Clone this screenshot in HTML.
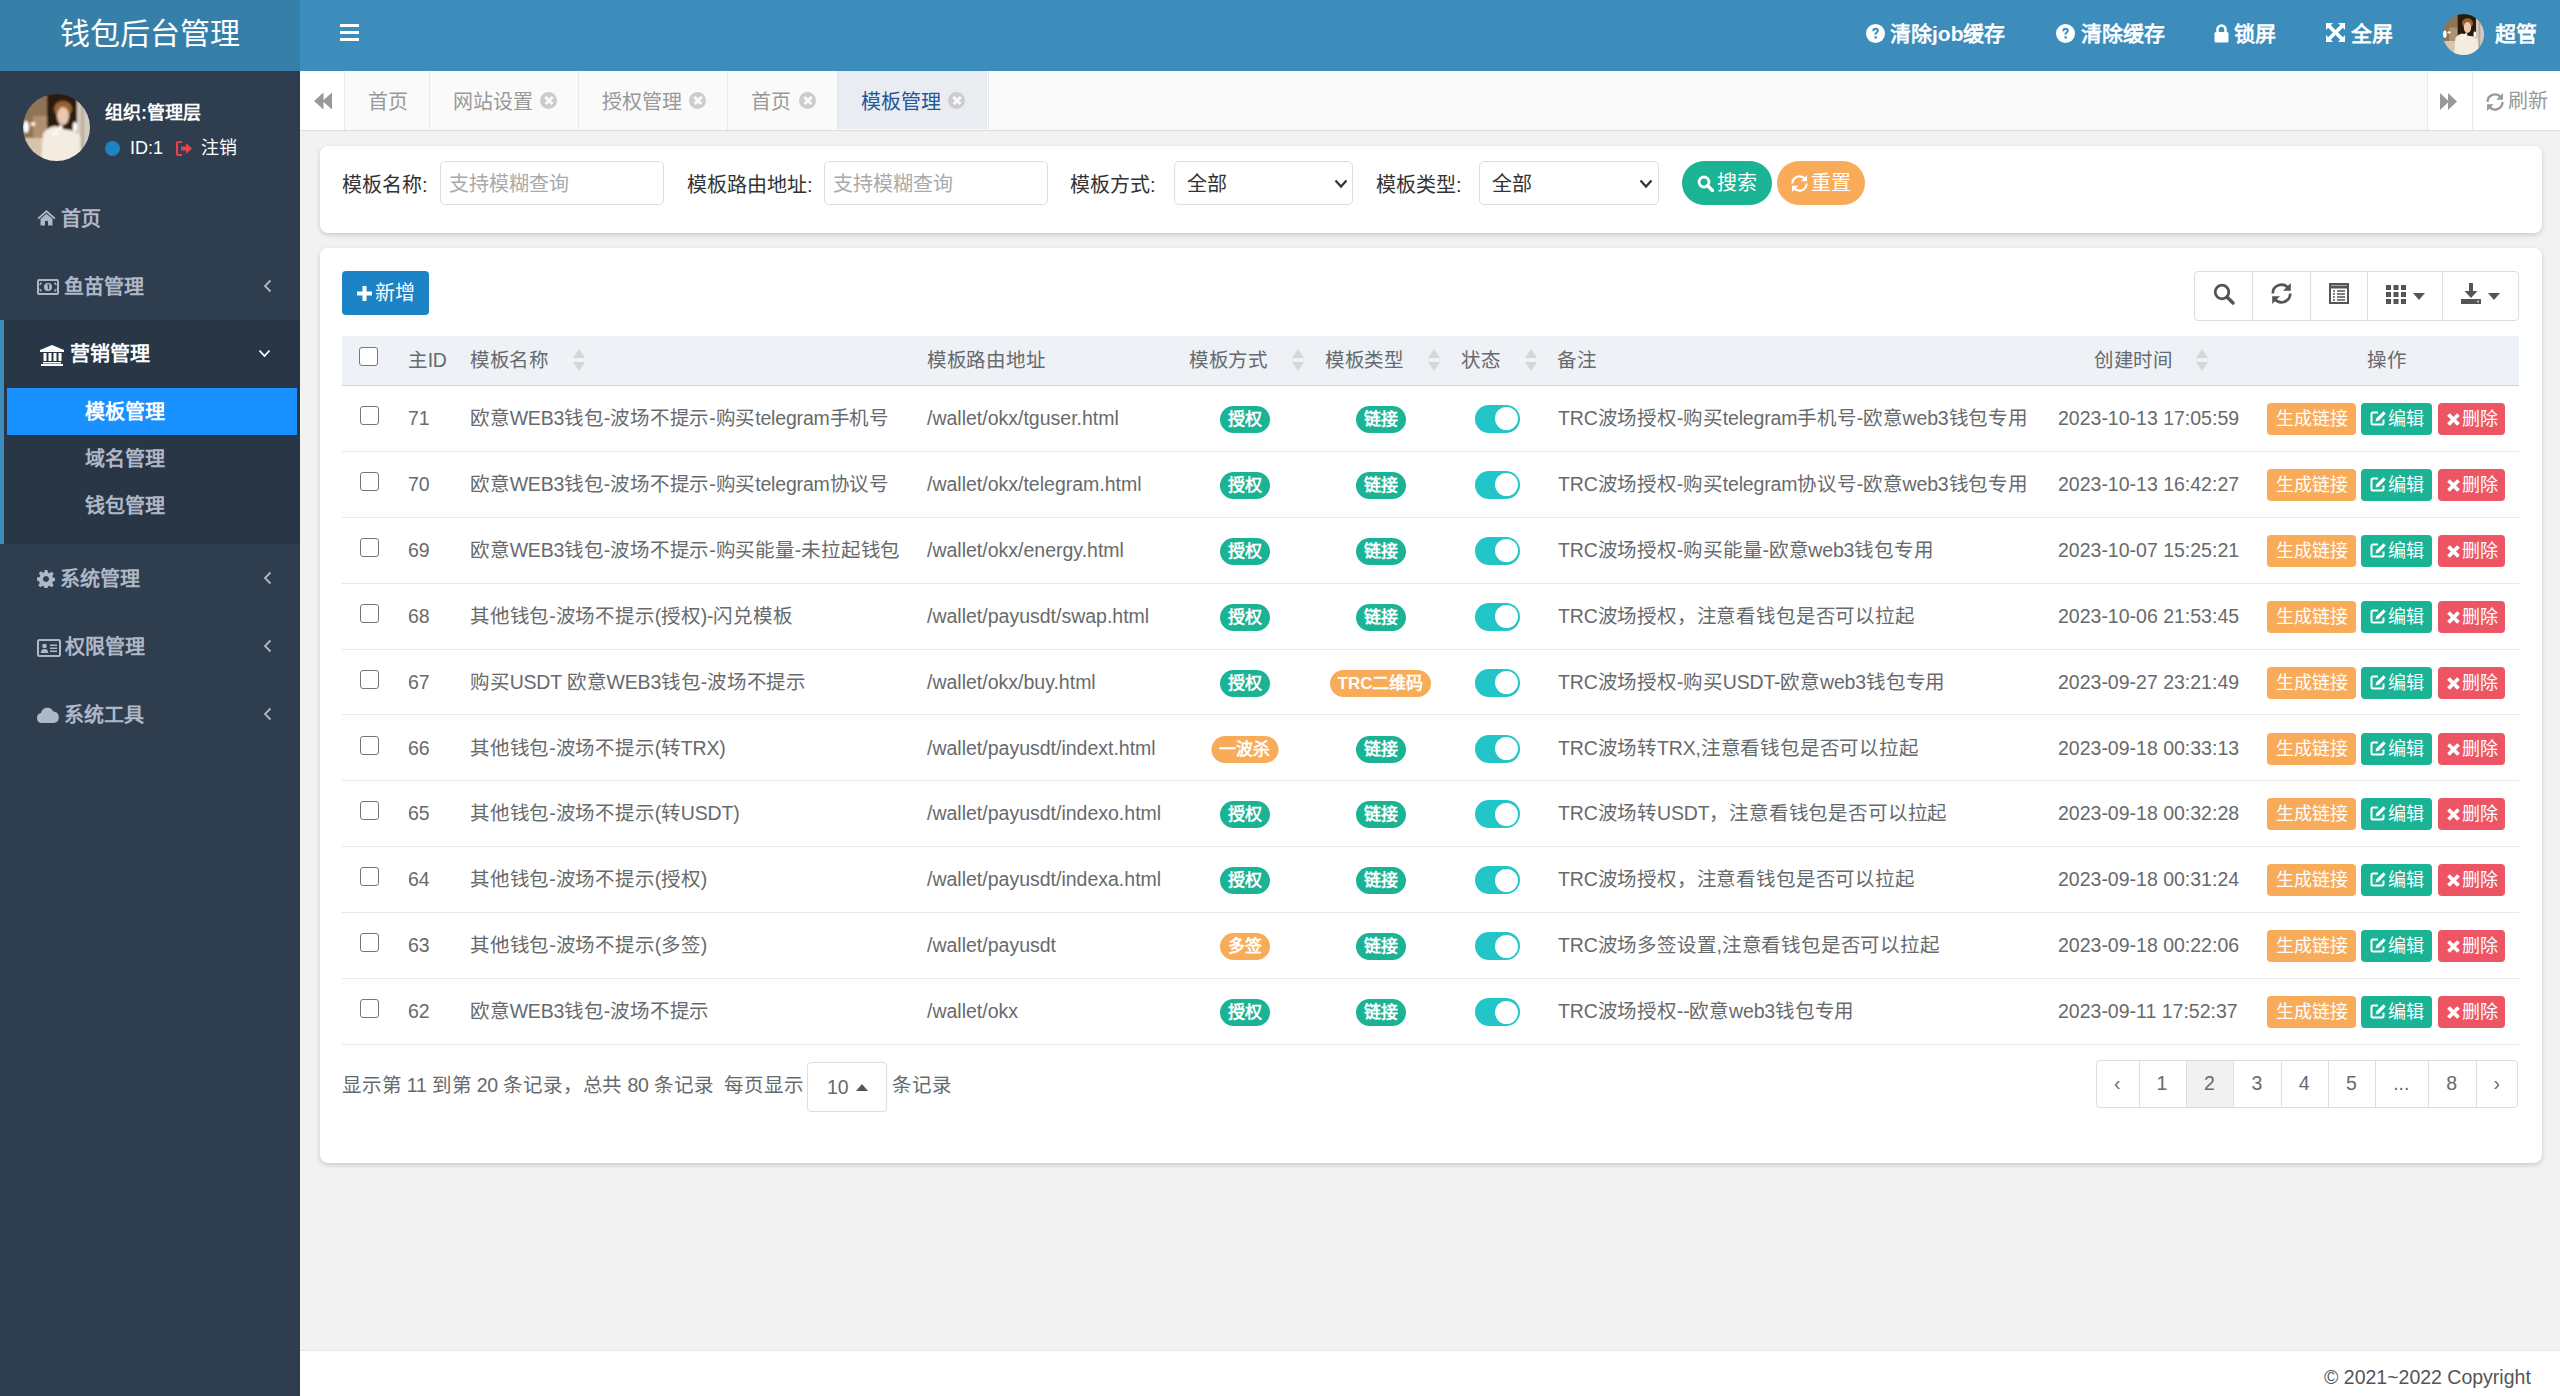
<!DOCTYPE html>
<html lang="zh-CN"><head><meta charset="utf-8"><style>
*{box-sizing:border-box;margin:0;padding:0}
html,body{width:2560px;height:1396px;overflow:hidden}
body{font-family:"Liberation Sans",sans-serif;background:#f2f2f2;color:#333;position:relative;font-size:20px}
.a{position:absolute;white-space:nowrap}
#logo{left:0;top:0;width:300px;height:71px;background:#367fa9;color:#fff;font-size:30px;line-height:67px;text-align:center;font-weight:300}
#hdr{left:300px;top:0;width:2260px;height:71px;background:#3c8dbc}
.nav{color:#fff;font-size:21px;font-weight:bold;line-height:30px;top:19px}
#side{left:0;top:71px;width:300px;height:1325px;background:#2f3e4f}
.mi{color:#afb8c7;font-size:20px;font-weight:bold;line-height:26px}
.sub{color:#afb8c7;font-size:20px;font-weight:bold;line-height:26px;left:85px}
#tabs{left:300px;top:71px;width:2260px;height:60px;background:#fafafa;border-bottom:1px solid #dcdcdc}
.tab{top:0;height:59px;border-left:1px solid #e8e8e8;color:#999;font-size:20px;line-height:62px}
.tx{position:absolute;top:21px;width:17px;height:17px;border-radius:50%;background:#ccc}
.tx:before,.tx:after{content:"";position:absolute;left:3.5px;top:7.25px;width:10px;height:2.5px;background:#fafafa;transform:rotate(45deg)}
.tx:after{transform:rotate(-45deg)}
#foot{left:300px;top:1350px;width:2260px;height:46px;background:#fff;border-top:1px solid #e3e7eb}
.panel{background:#fff;border-radius:8px;box-shadow:0 2px 5px rgba(0,0,0,.17)}
.lbl{font-size:20px;color:#333;line-height:26px;top:172px}
.inp{top:161px;height:44px;border:1px solid #ddd;border-radius:5px;background:#fff;font-size:20px;line-height:44px;padding-left:8px;color:#aaa}
.sel{color:#333;padding-left:12px}
.pill{top:161px;height:44px;border-radius:22px;color:#fff;font-size:20px;line-height:44px;text-align:center}
.row{left:342px;width:2177px;border-bottom:1px solid #e7eaec;background:#fff}
.cb{width:19px;height:19px;border:1.5px solid #767676;border-radius:3px;background:#fff}
.td{font-size:19.5px;color:#676a6c;line-height:26px}
.th{font-size:19.5px;color:#676a6c;line-height:26px;top:347px;letter-spacing:-0.3px}
.cj{letter-spacing:-0.18px}
.badge{height:27px;line-height:27px;border-radius:13.5px;color:#fff;font-size:17px;font-weight:bold;padding:0 8px;transform:translateX(-50%)}
.tog{width:45px;height:28px;border-radius:14px;background:#23c6c8}
.knob{position:absolute;right:2px;top:2.5px;width:23px;height:23px;border-radius:50%;background:#fff}
.btn{height:32px;line-height:32px;border-radius:4px;color:#fff;font-size:18px;text-align:center}
.btn .ic{display:inline-block;vertical-align:top;line-height:0;margin-right:1px}.btn .ic svg{display:block}
.srt{width:12px;height:24px}
.tb{top:271px;height:50px;border:1px solid #ddd;background:#fff}
.pg{top:1060px;height:48px;border:1px solid #ddd;border-left:none;font-size:20px;color:#676a6c;line-height:46px;text-align:center}

</style></head><body>
<div id="logo" class="a">钱包后台管理</div>
<div id="hdr" class="a"></div>
<!-- hamburger -->
<div class="a" style="left:340px;top:24px;width:19px;height:3px;background:#fff"></div>
<div class="a" style="left:340px;top:31px;width:19px;height:3px;background:#fff"></div>
<div class="a" style="left:340px;top:38px;width:19px;height:3px;background:#fff"></div>
<!-- right nav -->
<svg class="a" style="left:1866px;top:24px" width="19" height="19" viewBox="0 0 19 19"><circle cx="9.5" cy="9.5" r="9.5" fill="#fff"/><path d="M6.3 7.2q0-3.4 3.3-3.4 3.2 0 3.2 2.9 0 1.6-1.6 2.5-.9.5-.9 1.6H8.5q0-2 1.3-2.7.9-.5.9-1.3 0-1-1.1-1-1.2 0-1.3 1.4z M8.5 12.2h2.4v2.4H8.5z" fill="#3c8dbc"/></svg>
<div class="a nav" style="left:1890px">清除job缓存</div>
<svg class="a" style="left:2056px;top:24px" width="19" height="19" viewBox="0 0 19 19"><circle cx="9.5" cy="9.5" r="9.5" fill="#fff"/><path d="M6.3 7.2q0-3.4 3.3-3.4 3.2 0 3.2 2.9 0 1.6-1.6 2.5-.9.5-.9 1.6H8.5q0-2 1.3-2.7.9-.5.9-1.3 0-1-1.1-1-1.2 0-1.3 1.4z M8.5 12.2h2.4v2.4H8.5z" fill="#3c8dbc"/></svg>
<div class="a nav" style="left:2081px">清除缓存</div>
<svg class="a" style="left:2214px;top:24px" width="15" height="19" viewBox="0 0 15 19"><path d="M3.5 8V5.5a4 4 0 0 1 8 0V8" fill="none" stroke="#fff" stroke-width="2.6"/><rect x="0.5" y="8" width="14" height="10.5" rx="1.5" fill="#fff"/></svg>
<div class="a nav" style="left:2234px">锁屏</div>
<svg class="a" style="left:2326px;top:23px" width="19" height="19" viewBox="0 0 19 19"><path d="M0 0h7L4.8 2.2 9.5 6.9 14.2 2.2 12 0h7v7l-2.2-2.2-4.7 4.7 4.7 4.7L19 12v7h-7l2.2-2.2-4.7-4.7-4.7 4.7L7 19H0v-7l2.2 2.2 4.7-4.7-4.7-4.7L0 7z" fill="#fff"/></svg>
<div class="a nav" style="left:2351px">全屏</div>
<svg class="a" style="left:2443px;top:14px" width="41" height="41" viewBox="0 0 67 67"><defs><clipPath id="cpb"><circle cx="33.5" cy="33.5" r="33.5"/></clipPath><filter id="blb"><feGaussianBlur stdDeviation="0.8"/></filter></defs><g clip-path="url(#cpb)"><g filter="url(#blb)">
<rect x="-2" y="-2" width="71" height="71" fill="#a88c6c"/>
<rect x="-2" y="-2" width="28" height="50" fill="#8f7355"/>
<rect x="10" y="22" width="14" height="22" fill="#b09070"/>
<rect x="24" y="-2" width="31" height="38" fill="#2a1a0c"/>
<rect x="54" y="-2" width="15" height="60" fill="#d5cbbf"/>
<rect x="58" y="5" width="3" height="50" fill="#b9ab9a"/>
<rect x="-2" y="44" width="26" height="25" fill="#d8c3ab"/>
<ellipse cx="3" cy="33" rx="3" ry="6" fill="#fff"/>
<ellipse cx="10" cy="30" rx="2.5" ry="2" fill="#fff4d8"/>
<ellipse cx="52" cy="33" rx="2.2" ry="5" fill="#fff"/>
<ellipse cx="40" cy="15" rx="9" ry="8" fill="#9a6232"/>
<ellipse cx="40" cy="22" rx="6" ry="9" fill="#ecc8ad"/>
<path d="M18 69L20 40Q24 33 32 32L40 35Q50 36 57 41L58 69z" fill="#f4ece1"/>
<path d="M28 40Q34 34 38 30L40 34Q36 38 32 44z" fill="#fbf6ee"/>
</g></g></svg>
<div class="a nav" style="left:2495px">超管</div>

<div id="side" class="a">
 <svg class="a" style="left:23px;top:23px" width="67" height="67" viewBox="0 0 67 67"><defs><clipPath id="cpa"><circle cx="33.5" cy="33.5" r="33.5"/></clipPath><filter id="bla"><feGaussianBlur stdDeviation="0.8"/></filter></defs><g clip-path="url(#cpa)"><g filter="url(#bla)">
<rect x="-2" y="-2" width="71" height="71" fill="#a88c6c"/>
<rect x="-2" y="-2" width="28" height="50" fill="#8f7355"/>
<rect x="10" y="22" width="14" height="22" fill="#b09070"/>
<rect x="24" y="-2" width="31" height="38" fill="#2a1a0c"/>
<rect x="54" y="-2" width="15" height="60" fill="#d5cbbf"/>
<rect x="58" y="5" width="3" height="50" fill="#b9ab9a"/>
<rect x="-2" y="44" width="26" height="25" fill="#d8c3ab"/>
<ellipse cx="3" cy="33" rx="3" ry="6" fill="#fff"/>
<ellipse cx="10" cy="30" rx="2.5" ry="2" fill="#fff4d8"/>
<ellipse cx="52" cy="33" rx="2.2" ry="5" fill="#fff"/>
<ellipse cx="40" cy="15" rx="9" ry="8" fill="#9a6232"/>
<ellipse cx="40" cy="22" rx="6" ry="9" fill="#ecc8ad"/>
<path d="M18 69L20 40Q24 33 32 32L40 35Q50 36 57 41L58 69z" fill="#f4ece1"/>
<path d="M28 40Q34 34 38 30L40 34Q36 38 32 44z" fill="#fbf6ee"/>
</g></g></svg>
 <div class="a" style="left:105px;top:29px;font-size:18px;font-weight:bold;color:#fff;line-height:26px">组织:管理层</div>
 <div class="a" style="left:105px;top:70px;width:15px;height:15px;border-radius:50%;background:#1c84c6"></div>
 <div class="a" style="left:130px;top:64px;font-size:18px;color:#fff;line-height:26px">ID:1</div>
 <svg class="a" style="left:176px;top:69px" width="17" height="17" viewBox="0 0 17 17"><path d="M6 2H2.5Q1 2 1 3.5v10Q1 15 2.5 15H6" fill="none" stroke="#e4434f" stroke-width="2.2"/><path d="M5 6.5h5V3l6 5.5-6 5.5v-3.5H5z" fill="#e4434f"/></svg>
 <div class="a" style="left:201px;top:64px;font-size:18px;color:#fff;line-height:26px">注销</div>

 <!-- menu: 首页 -->
 <svg class="a" style="left:37px;top:138px" width="19" height="17" viewBox="0 0 19 17"><path d="M9.5 1L0.5 9l1.3 1.3L9.5 3.5l7.7 6.8L18.5 9zM3.5 10v6.5h4.5v-4.5h3v4.5h4.5V10L9.5 4.7z" fill="#afb8c7"/></svg>
 <div class="a mi" style="left:61px;top:135px">首页</div>
 <!-- 鱼苗管理 -->
 <svg class="a" style="left:37px;top:208px" width="22" height="16" viewBox="0 0 22 16"><rect x="1" y="1" width="20" height="14" rx="1" fill="none" stroke="#afb8c7" stroke-width="2"/><circle cx="11" cy="8" r="4" fill="#afb8c7"/><path d="M10.3 5.8h1.2v4.5" stroke="#2f3e4f" stroke-width="1.3" fill="none"/><path d="M4 3.5q0 2-1.5 2M18 3.5q0 2 1.5 2M4 12.5q0-2-1.5-2M18 12.5q0-2 1.5-2" stroke="#afb8c7" stroke-width="1.5" fill="none"/></svg>
 <div class="a mi" style="left:64px;top:203px">鱼苗管理</div>
 <svg class="a" style="left:263px;top:208px" width="9" height="14" viewBox="0 0 9 14"><path d="M7.5 1.5L2 7l5.5 5.5" fill="none" stroke="#afb8c7" stroke-width="1.8"/></svg>
 <!-- treeview active -->
 <div class="a" style="left:0;top:249px;width:300px;height:224px;background:#283646"></div>
 <div class="a" style="left:0;top:249px;width:4px;height:224px;background:#3c8dbc"></div>
 <svg class="a" style="left:40px;top:274px" width="24" height="21" viewBox="0 0 24 21"><path d="M12 0L0 5v2h24V5z M1 19h22v2H1z M3 17h18v1.5H3z M3.5 8h3v8h-3z M8.5 8h3v8h-3z M13.5 8h3v8h-3z M18.5 8h3v8h-3z" fill="#fff"/></svg>
 <div class="a mi" style="left:70px;top:270px;color:#fff">营销管理</div>
 <svg class="a" style="left:258px;top:278px" width="13" height="9" viewBox="0 0 13 9"><path d="M1.5 1.5L6.5 7l5-5.5" fill="none" stroke="#fff" stroke-width="1.8"/></svg>
 <div class="a" style="left:7px;top:317px;width:290px;height:47px;background:#1890ff"></div>
 <div class="a sub" style="top:328px;color:#fff">模板管理</div>
 <div class="a sub" style="top:375px">域名管理</div>
 <div class="a sub" style="top:422px">钱包管理</div>
 <!-- 系统管理 -->
 <svg class="a" style="left:37px;top:499px" width="18" height="18" viewBox="0 0 18 18"><path d="M7.6 0h2.8l.5 2.6 1.6.7 2.2-1.5 2 2-1.5 2.2.7 1.6 2.6.5v2.8l-2.6.5-.7 1.6 1.5 2.2-2 2-2.2-1.5-1.6.7-.5 2.6H7.6l-.5-2.6-1.6-.7-2.2 1.5-2-2 1.5-2.2-.7-1.6L0 10.4V7.6l2.6-.5.7-1.6-1.5-2.2 2-2 2.2 1.5 1.6-.7z M9 6a3 3 0 1 0 0.01 0z" fill="#afb8c7" fill-rule="evenodd"/></svg>
 <div class="a mi" style="left:60px;top:495px">系统管理</div>
 <svg class="a" style="left:263px;top:500px" width="9" height="14" viewBox="0 0 9 14"><path d="M7.5 1.5L2 7l5.5 5.5" fill="none" stroke="#afb8c7" stroke-width="1.8"/></svg>
 <!-- 权限管理 -->
 <svg class="a" style="left:37px;top:568px" width="24" height="18" viewBox="0 0 24 18"><rect x="1" y="1" width="22" height="16" rx="1.5" fill="none" stroke="#afb8c7" stroke-width="2"/><circle cx="7.5" cy="7" r="2.3" fill="#afb8c7"/><path d="M3.8 14q0-4 3.7-4t3.7 4z M13 5.5h7v1.6h-7z M13 8.5h7v1.6h-7z M13 11.5h7v1.6h-7z" fill="#afb8c7"/></svg>
 <div class="a mi" style="left:65px;top:563px">权限管理</div>
 <svg class="a" style="left:263px;top:568px" width="9" height="14" viewBox="0 0 9 14"><path d="M7.5 1.5L2 7l5.5 5.5" fill="none" stroke="#afb8c7" stroke-width="1.8"/></svg>
 <!-- 系统工具 -->
 <svg class="a" style="left:37px;top:636px" width="22" height="16" viewBox="0 0 22 16"><path d="M5 16a5 5 0 0 1-1-9.9A6.5 6.5 0 0 1 16.3 4.5 5.8 5.8 0 0 1 17 16z" fill="#afb8c7"/></svg>
 <div class="a mi" style="left:64px;top:631px">系统工具</div>
 <svg class="a" style="left:263px;top:636px" width="9" height="14" viewBox="0 0 9 14"><path d="M7.5 1.5L2 7l5.5 5.5" fill="none" stroke="#afb8c7" stroke-width="1.8"/></svg>
</div>

<div id="tabs" class="a">
 <div class="a" style="left:0;top:0;width:44px;height:59px;background:#fff"></div>
 <svg class="a" style="left:14px;top:21px" width="19" height="18" viewBox="0 0 19 18"><path d="M0 9L9.5 0.5v17z M8.5 9L18 0.5v17z" fill="#999"/></svg>
 <div class="a tab" style="left:44px;width:85px"><span class="a" style="left:23px;top:0">首页</span></div>
 <div class="a tab" style="left:129px;width:149px"><span class="a" style="left:23px;top:0">网站设置</span><i class="tx" style="left:110px"></i></div>
 <div class="a tab" style="left:278px;width:149px"><span class="a" style="left:23px;top:0">授权管理</span><i class="tx" style="left:110px"></i></div>
 <div class="a tab" style="left:427px;width:110px"><span class="a" style="left:23px;top:0">首页</span><i class="tx" style="left:71px"></i></div>
 <div class="a tab" style="left:537px;width:150px;height:58px;background:#e9edf2;color:#245697"><span class="a" style="left:23px;top:0">模板管理</span><i class="tx" style="left:110px;background:#ccc"></i></div>
 <div class="a" style="left:688px;top:0;width:1px;height:59px;background:#e8e8e8"></div>
 <div class="a" style="left:2127px;top:0;width:133px;height:59px;background:#fff;border-left:1px solid #e8e8e8"></div>
 <svg class="a" style="left:2140px;top:22px" width="18" height="17" viewBox="0 0 18 17"><path d="M0 0L9 8.5 0 17z M8 0l9 8.5L8 17z" fill="#999"/></svg>
 <div class="a" style="left:2172px;top:0;width:1px;height:59px;background:#e8e8e8"></div>
 <svg class="a" style="left:2186px;top:22px" width="18" height="18" viewBox="0 0 21 21"><path d="M1.8 10.5A8.7 8.7 0 0 1 17.2 4.9M19.2 10.5A8.7 8.7 0 0 1 3.8 16.1" fill="none" stroke="#999" stroke-width="2.7"/><path d="M19.8 0V7.8H12z M1.2 21V13.2H9z" fill="#999"/></svg>
 <div class="a" style="left:2208px;top:17px;color:#999;font-size:20px;line-height:26px">刷新</div>
</div>

<div class="a panel" style="left:320px;top:146px;width:2222px;height:87px"></div>
<div class="a lbl" style="left:342px">模板名称:</div>
<div class="a inp" style="left:440px;width:224px">支持模糊查询</div>
<div class="a lbl" style="left:687px">模板路由地址:</div>
<div class="a inp" style="left:824px;width:224px">支持模糊查询</div>
<div class="a lbl" style="left:1070px">模板方式:</div>
<div class="a inp sel" style="left:1174px;width:179px">全部<svg class="a" style="left:159px;top:17px" width="14" height="10" viewBox="0 0 14 10"><path d="M1.5 1.5L7 7.5l5.5-6" fill="none" stroke="#333" stroke-width="2.2"/></svg></div>
<div class="a lbl" style="left:1376px">模板类型:</div>
<div class="a inp sel" style="left:1479px;width:180px">全部<svg class="a" style="left:159px;top:17px" width="14" height="10" viewBox="0 0 14 10"><path d="M1.5 1.5L7 7.5l5.5-6" fill="none" stroke="#333" stroke-width="2.2"/></svg></div>
<div class="a pill" style="left:1682px;width:90px;background:#1ab394"><svg style="vertical-align:-2px;margin-right:3px" width="17" height="17" viewBox="0 0 17 17"><circle cx="7" cy="7" r="5" fill="none" stroke="#fff" stroke-width="2.8"/><path d="M10.5 10.5l5 5" stroke="#fff" stroke-width="3.2" stroke-linecap="round"/></svg>搜索</div>
<div class="a pill" style="left:1777px;width:88px;background:#f8ac59"><svg style="vertical-align:-2px;margin-right:3px" width="17" height="17" viewBox="0 0 21 21"><path d="M1.8 10.5A8.7 8.7 0 0 1 17.2 4.9M19.2 10.5A8.7 8.7 0 0 1 3.8 16.1" fill="none" stroke="#fff" stroke-width="2.7"/><path d="M19.8 0V7.8H12z M1.2 21V13.2H9z" fill="#fff"/></svg>重置</div>

<div class="a panel" style="left:320px;top:248px;width:2222px;height:915px"></div>
<div class="a" style="left:342px;top:271px;width:87px;height:44px;border-radius:4px;background:#1c84c6;color:#fff;font-size:20px;line-height:44px;text-align:center"><svg style="vertical-align:-1px;margin-right:3px" width="15" height="15" viewBox="0 0 15 15"><path d="M5.5 0h4v5.5H15v4H9.5V15h-4V9.5H0v-4h5.5z" fill="#fff"/></svg>新增</div>

<!-- toolbar -->
<div class="a" style="left:2194px;top:271px;width:325px;height:50px;border:1px solid #ddd;border-radius:4px;background:#fff"></div>
<div class="a" style="left:2252px;top:272px;width:1px;height:48px;background:#ddd"></div>
<div class="a" style="left:2310px;top:272px;width:1px;height:48px;background:#ddd"></div>
<div class="a" style="left:2367px;top:272px;width:1px;height:48px;background:#ddd"></div>
<div class="a" style="left:2442px;top:272px;width:1px;height:48px;background:#ddd"></div>
<svg class="a" style="left:2213px;top:283px" width="22" height="22" viewBox="0 0 22 22"><circle cx="9" cy="9" r="6.8" fill="none" stroke="#555" stroke-width="2.8"/><path d="M14 14l6 6" stroke="#555" stroke-width="3.4" stroke-linecap="round"/></svg>
<svg class="a" style="left:2271px;top:283px" width="21" height="21" viewBox="0 0 21 21"><path d="M1.8 10.5A8.7 8.7 0 0 1 17.2 4.9M19.2 10.5A8.7 8.7 0 0 1 3.8 16.1" fill="none" stroke="#555" stroke-width="2.7"/><path d="M19.8 0V7.8H12z M1.2 21V13.2H9z" fill="#555"/></svg>
<svg class="a" style="left:2329px;top:283px" width="20" height="21" viewBox="0 0 20 21"><rect x="1" y="1" width="18" height="19" fill="none" stroke="#555" stroke-width="2"/><path d="M1 4h18" stroke="#555" stroke-width="3"/><path d="M4 8h2M8 8h8M4 11h2M8 11h8M4 14h2M8 14h8M4 17h2M8 17h8" stroke="#555" stroke-width="1.6"/></svg>
<svg class="a" style="left:2386px;top:285px" width="20" height="19" viewBox="0 0 20 19"><path d="M0 0h5v5H0zM7.5 0h5v5h-5zM15 0h5v5h-5zM0 7h5v5H0zM7.5 7h5v5h-5zM15 7h5v5h-5zM0 14h5v5H0zM7.5 14h5v5h-5zM15 14h5v5h-5z" fill="#555"/></svg>
<svg class="a" style="left:2413px;top:293px" width="12" height="7" viewBox="0 0 12 7"><path d="M0 0h12L6 7z" fill="#555"/></svg>
<svg class="a" style="left:2461px;top:283px" width="20" height="21" viewBox="0 0 20 21"><path d="M8 0h4v8h4.5L10 15 3.5 8H8z" fill="#555"/><path d="M0 16h20v5H0z" fill="#555"/><circle cx="17" cy="18.5" r="1" fill="#ddd"/></svg>
<svg class="a" style="left:2488px;top:293px" width="12" height="7" viewBox="0 0 12 7"><path d="M0 0h12L6 7z" fill="#555"/></svg>

<!-- table header -->
<div class="a" style="left:342px;top:336px;width:2177px;height:50px;background:#eef1f6;border-bottom:1.5px solid #cfd3d8"></div>
<div class="a cb" style="left:359px;top:347px"></div>
<div class="a th" style="left:408px">主ID</div>
<div class="a th" style="left:470px">模板名称</div>
<div class="a th" style="left:927px">模板路由地址</div>
<div class="a th" style="left:1189px">模板方式</div>
<div class="a th" style="left:1325px">模板类型</div>
<div class="a th" style="left:1461px">状态</div>
<div class="a th" style="left:1557px">备注</div>
<div class="a th" style="left:2094px">创建时间</div>
<div class="a th" style="left:2367px">操作</div>
<svg class="a" style="left:573px;top:349px" width="12" height="22" viewBox="0 0 12 22"><path d="M6 0l6 9H0z M6 22l6-9H0z" fill="#d5d5d5"/></svg>
<svg class="a" style="left:1292px;top:349px" width="12" height="22" viewBox="0 0 12 22"><path d="M6 0l6 9H0z M6 22l6-9H0z" fill="#d5d5d5"/></svg>
<svg class="a" style="left:1428px;top:349px" width="12" height="22" viewBox="0 0 12 22"><path d="M6 0l6 9H0z M6 22l6-9H0z" fill="#d5d5d5"/></svg>
<svg class="a" style="left:1525px;top:349px" width="12" height="22" viewBox="0 0 12 22"><path d="M6 0l6 9H0z M6 22l6-9H0z" fill="#d5d5d5"/></svg>
<svg class="a" style="left:2196px;top:349px" width="12" height="22" viewBox="0 0 12 22"><path d="M6 0l6 9H0z M6 22l6-9H0z" fill="#d5d5d5"/></svg>

<div class="a row" style="top:386.0px;height:65.9px"></div>
<div class="a cb" style="left:360px;top:405.9px"></div>
<div class="a td" style="left:408px;top:404.9px">71</div>
<div class="a td cj" style="left:470px;top:404.9px">欧意WEB3钱包-波场不提示-购买telegram手机号</div>
<div class="a td" style="left:927px;top:404.9px">/wallet/okx/tguser.html</div>
<div class="a badge" style="left:1244.5px;top:405.9px;background:#1ab394">授权</div>
<div class="a badge" style="left:1380.5px;top:405.9px;background:#1ab394">链接</div>
<div class="a tog" style="left:1475px;top:404.9px"><div class="knob"></div></div>
<div class="a td cj" style="left:1558px;top:404.9px">TRC波场授权-购买telegram手机号-欧意web3钱包专用</div>
<div class="a td" style="left:2058px;top:404.9px">2023-10-13 17:05:59</div>
<div class="a btn" style="left:2267px;top:402.9px;width:89px;background:#f8ac59">生成链接</div>
<div class="a btn" style="left:2361px;top:402.9px;width:71px;background:#1ab394"><span class="ic" style="margin-top:7px"><svg width="17" height="16" viewBox="0 0 17 16"><path d="M8 2.5H3Q1.5 2.5 1.5 4v9q0 1.5 1.5 1.5h9q1.5 0 1.5-1.5V9.5" fill="none" stroke="#fff" stroke-width="2"/><path d="M5.5 11.5l.8-3.2L13.5 1.2 15.8 3.5 8.7 10.7z" fill="#fff"/></svg></span>编辑</div>
<div class="a btn" style="left:2438px;top:402.9px;width:67px;background:#ed5565"><span class="ic" style="margin-top:9px"><svg width="15" height="15" viewBox="0 0 15 15"><path d="M2.5 2.5l10 10M12.5 2.5l-10 10" stroke="#fff" stroke-width="3.8"/></svg></span>删除</div>
<div class="a row" style="top:451.9px;height:65.9px"></div>
<div class="a cb" style="left:360px;top:471.8px"></div>
<div class="a td" style="left:408px;top:470.8px">70</div>
<div class="a td cj" style="left:470px;top:470.8px">欧意WEB3钱包-波场不提示-购买telegram协议号</div>
<div class="a td" style="left:927px;top:470.8px">/wallet/okx/telegram.html</div>
<div class="a badge" style="left:1244.5px;top:471.8px;background:#1ab394">授权</div>
<div class="a badge" style="left:1380.5px;top:471.8px;background:#1ab394">链接</div>
<div class="a tog" style="left:1475px;top:470.8px"><div class="knob"></div></div>
<div class="a td cj" style="left:1558px;top:470.8px">TRC波场授权-购买telegram协议号-欧意web3钱包专用</div>
<div class="a td" style="left:2058px;top:470.8px">2023-10-13 16:42:27</div>
<div class="a btn" style="left:2267px;top:468.8px;width:89px;background:#f8ac59">生成链接</div>
<div class="a btn" style="left:2361px;top:468.8px;width:71px;background:#1ab394"><span class="ic" style="margin-top:7px"><svg width="17" height="16" viewBox="0 0 17 16"><path d="M8 2.5H3Q1.5 2.5 1.5 4v9q0 1.5 1.5 1.5h9q1.5 0 1.5-1.5V9.5" fill="none" stroke="#fff" stroke-width="2"/><path d="M5.5 11.5l.8-3.2L13.5 1.2 15.8 3.5 8.7 10.7z" fill="#fff"/></svg></span>编辑</div>
<div class="a btn" style="left:2438px;top:468.8px;width:67px;background:#ed5565"><span class="ic" style="margin-top:9px"><svg width="15" height="15" viewBox="0 0 15 15"><path d="M2.5 2.5l10 10M12.5 2.5l-10 10" stroke="#fff" stroke-width="3.8"/></svg></span>删除</div>
<div class="a row" style="top:517.8px;height:65.9px"></div>
<div class="a cb" style="left:360px;top:537.8px"></div>
<div class="a td" style="left:408px;top:536.8px">69</div>
<div class="a td cj" style="left:470px;top:536.8px">欧意WEB3钱包-波场不提示-购买能量-未拉起钱包</div>
<div class="a td" style="left:927px;top:536.8px">/wallet/okx/energy.html</div>
<div class="a badge" style="left:1244.5px;top:537.8px;background:#1ab394">授权</div>
<div class="a badge" style="left:1380.5px;top:537.8px;background:#1ab394">链接</div>
<div class="a tog" style="left:1475px;top:536.8px"><div class="knob"></div></div>
<div class="a td cj" style="left:1558px;top:536.8px">TRC波场授权-购买能量-欧意web3钱包专用</div>
<div class="a td" style="left:2058px;top:536.8px">2023-10-07 15:25:21</div>
<div class="a btn" style="left:2267px;top:534.8px;width:89px;background:#f8ac59">生成链接</div>
<div class="a btn" style="left:2361px;top:534.8px;width:71px;background:#1ab394"><span class="ic" style="margin-top:7px"><svg width="17" height="16" viewBox="0 0 17 16"><path d="M8 2.5H3Q1.5 2.5 1.5 4v9q0 1.5 1.5 1.5h9q1.5 0 1.5-1.5V9.5" fill="none" stroke="#fff" stroke-width="2"/><path d="M5.5 11.5l.8-3.2L13.5 1.2 15.8 3.5 8.7 10.7z" fill="#fff"/></svg></span>编辑</div>
<div class="a btn" style="left:2438px;top:534.8px;width:67px;background:#ed5565"><span class="ic" style="margin-top:9px"><svg width="15" height="15" viewBox="0 0 15 15"><path d="M2.5 2.5l10 10M12.5 2.5l-10 10" stroke="#fff" stroke-width="3.8"/></svg></span>删除</div>
<div class="a row" style="top:583.7px;height:65.9px"></div>
<div class="a cb" style="left:360px;top:603.7px"></div>
<div class="a td" style="left:408px;top:602.7px">68</div>
<div class="a td cj" style="left:470px;top:602.7px">其他钱包-波场不提示(授权)-闪兑模板</div>
<div class="a td" style="left:927px;top:602.7px">/wallet/payusdt/swap.html</div>
<div class="a badge" style="left:1244.5px;top:603.7px;background:#1ab394">授权</div>
<div class="a badge" style="left:1380.5px;top:603.7px;background:#1ab394">链接</div>
<div class="a tog" style="left:1475px;top:602.7px"><div class="knob"></div></div>
<div class="a td cj" style="left:1558px;top:602.7px">TRC波场授权，注意看钱包是否可以拉起</div>
<div class="a td" style="left:2058px;top:602.7px">2023-10-06 21:53:45</div>
<div class="a btn" style="left:2267px;top:600.7px;width:89px;background:#f8ac59">生成链接</div>
<div class="a btn" style="left:2361px;top:600.7px;width:71px;background:#1ab394"><span class="ic" style="margin-top:7px"><svg width="17" height="16" viewBox="0 0 17 16"><path d="M8 2.5H3Q1.5 2.5 1.5 4v9q0 1.5 1.5 1.5h9q1.5 0 1.5-1.5V9.5" fill="none" stroke="#fff" stroke-width="2"/><path d="M5.5 11.5l.8-3.2L13.5 1.2 15.8 3.5 8.7 10.7z" fill="#fff"/></svg></span>编辑</div>
<div class="a btn" style="left:2438px;top:600.7px;width:67px;background:#ed5565"><span class="ic" style="margin-top:9px"><svg width="15" height="15" viewBox="0 0 15 15"><path d="M2.5 2.5l10 10M12.5 2.5l-10 10" stroke="#fff" stroke-width="3.8"/></svg></span>删除</div>
<div class="a row" style="top:649.6px;height:65.9px"></div>
<div class="a cb" style="left:360px;top:669.6px"></div>
<div class="a td" style="left:408px;top:668.6px">67</div>
<div class="a td cj" style="left:470px;top:668.6px">购买USDT 欧意WEB3钱包-波场不提示</div>
<div class="a td" style="left:927px;top:668.6px">/wallet/okx/buy.html</div>
<div class="a badge" style="left:1244.5px;top:669.6px;background:#1ab394">授权</div>
<div class="a badge" style="left:1380.5px;top:669.6px;background:#f8ac59">TRC二维码</div>
<div class="a tog" style="left:1475px;top:668.6px"><div class="knob"></div></div>
<div class="a td cj" style="left:1558px;top:668.6px">TRC波场授权-购买USDT-欧意web3钱包专用</div>
<div class="a td" style="left:2058px;top:668.6px">2023-09-27 23:21:49</div>
<div class="a btn" style="left:2267px;top:666.6px;width:89px;background:#f8ac59">生成链接</div>
<div class="a btn" style="left:2361px;top:666.6px;width:71px;background:#1ab394"><span class="ic" style="margin-top:7px"><svg width="17" height="16" viewBox="0 0 17 16"><path d="M8 2.5H3Q1.5 2.5 1.5 4v9q0 1.5 1.5 1.5h9q1.5 0 1.5-1.5V9.5" fill="none" stroke="#fff" stroke-width="2"/><path d="M5.5 11.5l.8-3.2L13.5 1.2 15.8 3.5 8.7 10.7z" fill="#fff"/></svg></span>编辑</div>
<div class="a btn" style="left:2438px;top:666.6px;width:67px;background:#ed5565"><span class="ic" style="margin-top:9px"><svg width="15" height="15" viewBox="0 0 15 15"><path d="M2.5 2.5l10 10M12.5 2.5l-10 10" stroke="#fff" stroke-width="3.8"/></svg></span>删除</div>
<div class="a row" style="top:715.5px;height:65.9px"></div>
<div class="a cb" style="left:360px;top:735.5px"></div>
<div class="a td" style="left:408px;top:734.5px">66</div>
<div class="a td cj" style="left:470px;top:734.5px">其他钱包-波场不提示(转TRX)</div>
<div class="a td" style="left:927px;top:734.5px">/wallet/payusdt/indext.html</div>
<div class="a badge" style="left:1244.5px;top:735.5px;background:#f8ac59">一波杀</div>
<div class="a badge" style="left:1380.5px;top:735.5px;background:#1ab394">链接</div>
<div class="a tog" style="left:1475px;top:734.5px"><div class="knob"></div></div>
<div class="a td cj" style="left:1558px;top:734.5px">TRC波场转TRX,注意看钱包是否可以拉起</div>
<div class="a td" style="left:2058px;top:734.5px">2023-09-18 00:33:13</div>
<div class="a btn" style="left:2267px;top:732.5px;width:89px;background:#f8ac59">生成链接</div>
<div class="a btn" style="left:2361px;top:732.5px;width:71px;background:#1ab394"><span class="ic" style="margin-top:7px"><svg width="17" height="16" viewBox="0 0 17 16"><path d="M8 2.5H3Q1.5 2.5 1.5 4v9q0 1.5 1.5 1.5h9q1.5 0 1.5-1.5V9.5" fill="none" stroke="#fff" stroke-width="2"/><path d="M5.5 11.5l.8-3.2L13.5 1.2 15.8 3.5 8.7 10.7z" fill="#fff"/></svg></span>编辑</div>
<div class="a btn" style="left:2438px;top:732.5px;width:67px;background:#ed5565"><span class="ic" style="margin-top:9px"><svg width="15" height="15" viewBox="0 0 15 15"><path d="M2.5 2.5l10 10M12.5 2.5l-10 10" stroke="#fff" stroke-width="3.8"/></svg></span>删除</div>
<div class="a row" style="top:781.4px;height:65.9px"></div>
<div class="a cb" style="left:360px;top:801.4px"></div>
<div class="a td" style="left:408px;top:800.4px">65</div>
<div class="a td cj" style="left:470px;top:800.4px">其他钱包-波场不提示(转USDT)</div>
<div class="a td" style="left:927px;top:800.4px">/wallet/payusdt/indexo.html</div>
<div class="a badge" style="left:1244.5px;top:801.4px;background:#1ab394">授权</div>
<div class="a badge" style="left:1380.5px;top:801.4px;background:#1ab394">链接</div>
<div class="a tog" style="left:1475px;top:800.4px"><div class="knob"></div></div>
<div class="a td cj" style="left:1558px;top:800.4px">TRC波场转USDT，注意看钱包是否可以拉起</div>
<div class="a td" style="left:2058px;top:800.4px">2023-09-18 00:32:28</div>
<div class="a btn" style="left:2267px;top:798.4px;width:89px;background:#f8ac59">生成链接</div>
<div class="a btn" style="left:2361px;top:798.4px;width:71px;background:#1ab394"><span class="ic" style="margin-top:7px"><svg width="17" height="16" viewBox="0 0 17 16"><path d="M8 2.5H3Q1.5 2.5 1.5 4v9q0 1.5 1.5 1.5h9q1.5 0 1.5-1.5V9.5" fill="none" stroke="#fff" stroke-width="2"/><path d="M5.5 11.5l.8-3.2L13.5 1.2 15.8 3.5 8.7 10.7z" fill="#fff"/></svg></span>编辑</div>
<div class="a btn" style="left:2438px;top:798.4px;width:67px;background:#ed5565"><span class="ic" style="margin-top:9px"><svg width="15" height="15" viewBox="0 0 15 15"><path d="M2.5 2.5l10 10M12.5 2.5l-10 10" stroke="#fff" stroke-width="3.8"/></svg></span>删除</div>
<div class="a row" style="top:847.3px;height:65.9px"></div>
<div class="a cb" style="left:360px;top:867.3px"></div>
<div class="a td" style="left:408px;top:866.3px">64</div>
<div class="a td cj" style="left:470px;top:866.3px">其他钱包-波场不提示(授权)</div>
<div class="a td" style="left:927px;top:866.3px">/wallet/payusdt/indexa.html</div>
<div class="a badge" style="left:1244.5px;top:867.3px;background:#1ab394">授权</div>
<div class="a badge" style="left:1380.5px;top:867.3px;background:#1ab394">链接</div>
<div class="a tog" style="left:1475px;top:866.3px"><div class="knob"></div></div>
<div class="a td cj" style="left:1558px;top:866.3px">TRC波场授权，注意看钱包是否可以拉起</div>
<div class="a td" style="left:2058px;top:866.3px">2023-09-18 00:31:24</div>
<div class="a btn" style="left:2267px;top:864.3px;width:89px;background:#f8ac59">生成链接</div>
<div class="a btn" style="left:2361px;top:864.3px;width:71px;background:#1ab394"><span class="ic" style="margin-top:7px"><svg width="17" height="16" viewBox="0 0 17 16"><path d="M8 2.5H3Q1.5 2.5 1.5 4v9q0 1.5 1.5 1.5h9q1.5 0 1.5-1.5V9.5" fill="none" stroke="#fff" stroke-width="2"/><path d="M5.5 11.5l.8-3.2L13.5 1.2 15.8 3.5 8.7 10.7z" fill="#fff"/></svg></span>编辑</div>
<div class="a btn" style="left:2438px;top:864.3px;width:67px;background:#ed5565"><span class="ic" style="margin-top:9px"><svg width="15" height="15" viewBox="0 0 15 15"><path d="M2.5 2.5l10 10M12.5 2.5l-10 10" stroke="#fff" stroke-width="3.8"/></svg></span>删除</div>
<div class="a row" style="top:913.2px;height:65.9px"></div>
<div class="a cb" style="left:360px;top:933.2px"></div>
<div class="a td" style="left:408px;top:932.2px">63</div>
<div class="a td cj" style="left:470px;top:932.2px">其他钱包-波场不提示(多签)</div>
<div class="a td" style="left:927px;top:932.2px">/wallet/payusdt</div>
<div class="a badge" style="left:1244.5px;top:933.2px;background:#f8ac59">多签</div>
<div class="a badge" style="left:1380.5px;top:933.2px;background:#1ab394">链接</div>
<div class="a tog" style="left:1475px;top:932.2px"><div class="knob"></div></div>
<div class="a td cj" style="left:1558px;top:932.2px">TRC波场多签设置,注意看钱包是否可以拉起</div>
<div class="a td" style="left:2058px;top:932.2px">2023-09-18 00:22:06</div>
<div class="a btn" style="left:2267px;top:930.2px;width:89px;background:#f8ac59">生成链接</div>
<div class="a btn" style="left:2361px;top:930.2px;width:71px;background:#1ab394"><span class="ic" style="margin-top:7px"><svg width="17" height="16" viewBox="0 0 17 16"><path d="M8 2.5H3Q1.5 2.5 1.5 4v9q0 1.5 1.5 1.5h9q1.5 0 1.5-1.5V9.5" fill="none" stroke="#fff" stroke-width="2"/><path d="M5.5 11.5l.8-3.2L13.5 1.2 15.8 3.5 8.7 10.7z" fill="#fff"/></svg></span>编辑</div>
<div class="a btn" style="left:2438px;top:930.2px;width:67px;background:#ed5565"><span class="ic" style="margin-top:9px"><svg width="15" height="15" viewBox="0 0 15 15"><path d="M2.5 2.5l10 10M12.5 2.5l-10 10" stroke="#fff" stroke-width="3.8"/></svg></span>删除</div>
<div class="a row" style="top:979.1px;height:65.9px"></div>
<div class="a cb" style="left:360px;top:999.1px"></div>
<div class="a td" style="left:408px;top:998.1px">62</div>
<div class="a td cj" style="left:470px;top:998.1px">欧意WEB3钱包-波场不提示</div>
<div class="a td" style="left:927px;top:998.1px">/wallet/okx</div>
<div class="a badge" style="left:1244.5px;top:999.1px;background:#1ab394">授权</div>
<div class="a badge" style="left:1380.5px;top:999.1px;background:#1ab394">链接</div>
<div class="a tog" style="left:1475px;top:998.1px"><div class="knob"></div></div>
<div class="a td cj" style="left:1558px;top:998.1px">TRC波场授权--欧意web3钱包专用</div>
<div class="a td" style="left:2058px;top:998.1px">2023-09-11 17:52:37</div>
<div class="a btn" style="left:2267px;top:996.1px;width:89px;background:#f8ac59">生成链接</div>
<div class="a btn" style="left:2361px;top:996.1px;width:71px;background:#1ab394"><span class="ic" style="margin-top:7px"><svg width="17" height="16" viewBox="0 0 17 16"><path d="M8 2.5H3Q1.5 2.5 1.5 4v9q0 1.5 1.5 1.5h9q1.5 0 1.5-1.5V9.5" fill="none" stroke="#fff" stroke-width="2"/><path d="M5.5 11.5l.8-3.2L13.5 1.2 15.8 3.5 8.7 10.7z" fill="#fff"/></svg></span>编辑</div>
<div class="a btn" style="left:2438px;top:996.1px;width:67px;background:#ed5565"><span class="ic" style="margin-top:9px"><svg width="15" height="15" viewBox="0 0 15 15"><path d="M2.5 2.5l10 10M12.5 2.5l-10 10" stroke="#fff" stroke-width="3.8"/></svg></span>删除</div>
<div class="a td cj" style="left:342px;top:1072px;color:#676a6c">显示第 11 到第 20 条记录，总共 80 条记录</div>
<div class="a td" style="left:724px;top:1072px;color:#676a6c">每页显示</div>
<div class="a" style="left:807px;top:1062px;width:80px;height:50px;border:1px solid #ddd;border-radius:4px;background:#fff"></div>
<div class="a td" style="left:827px;top:1074px">10</div>
<svg class="a" style="left:856px;top:1084px" width="12" height="7" viewBox="0 0 12 7"><path d="M0 7h12L6 0z" fill="#555"/></svg>
<div class="a td" style="left:892px;top:1072px">条记录</div>
<!-- pagination -->
<div class="a" style="left:2096px;top:1060px;width:422px;height:48px;border:1px solid #ddd;border-radius:4px;background:#fff"></div>
<div class="a td" style="left:2096.0px;width:42.5px;top:1070px;text-align:center">‹</div>
<div class="a" style="left:2138.5px;top:1061px;width:1px;height:46px;background:#ddd"></div>
<div class="a td" style="left:2138.5px;width:47.0px;top:1070px;text-align:center">1</div>
<div class="a" style="left:2185.5px;top:1061px;width:1px;height:46px;background:#ddd"></div>
<div class="a" style="left:2186.5px;top:1061px;width:46.9px;height:46px;background:#f1f1f1;"></div>
<div class="a td" style="left:2185.5px;width:47.9px;top:1070px;text-align:center">2</div>
<div class="a" style="left:2233.4px;top:1061px;width:1px;height:46px;background:#ddd"></div>
<div class="a td" style="left:2233.4px;width:47.1px;top:1070px;text-align:center">3</div>
<div class="a" style="left:2280.5px;top:1061px;width:1px;height:46px;background:#ddd"></div>
<div class="a td" style="left:2280.5px;width:47.2px;top:1070px;text-align:center">4</div>
<div class="a" style="left:2327.7px;top:1061px;width:1px;height:46px;background:#ddd"></div>
<div class="a td" style="left:2327.7px;width:47.3px;top:1070px;text-align:center">5</div>
<div class="a" style="left:2375.0px;top:1061px;width:1px;height:46px;background:#ddd"></div>
<div class="a td" style="left:2375.0px;width:52.7px;top:1070px;text-align:center">...</div>
<div class="a" style="left:2427.7px;top:1061px;width:1px;height:46px;background:#ddd"></div>
<div class="a td" style="left:2427.7px;width:47.9px;top:1070px;text-align:center">8</div>
<div class="a" style="left:2475.6px;top:1061px;width:1px;height:46px;background:#ddd"></div>
<div class="a td" style="left:2475.6px;width:42.4px;top:1070px;text-align:center">›</div>
<div id="foot" class="a"></div>
<div class="a" style="left:2324px;top:1364px;font-size:19.5px;color:#555;line-height:26px">© 2021~2022 Copyright</div>

</body></html>
